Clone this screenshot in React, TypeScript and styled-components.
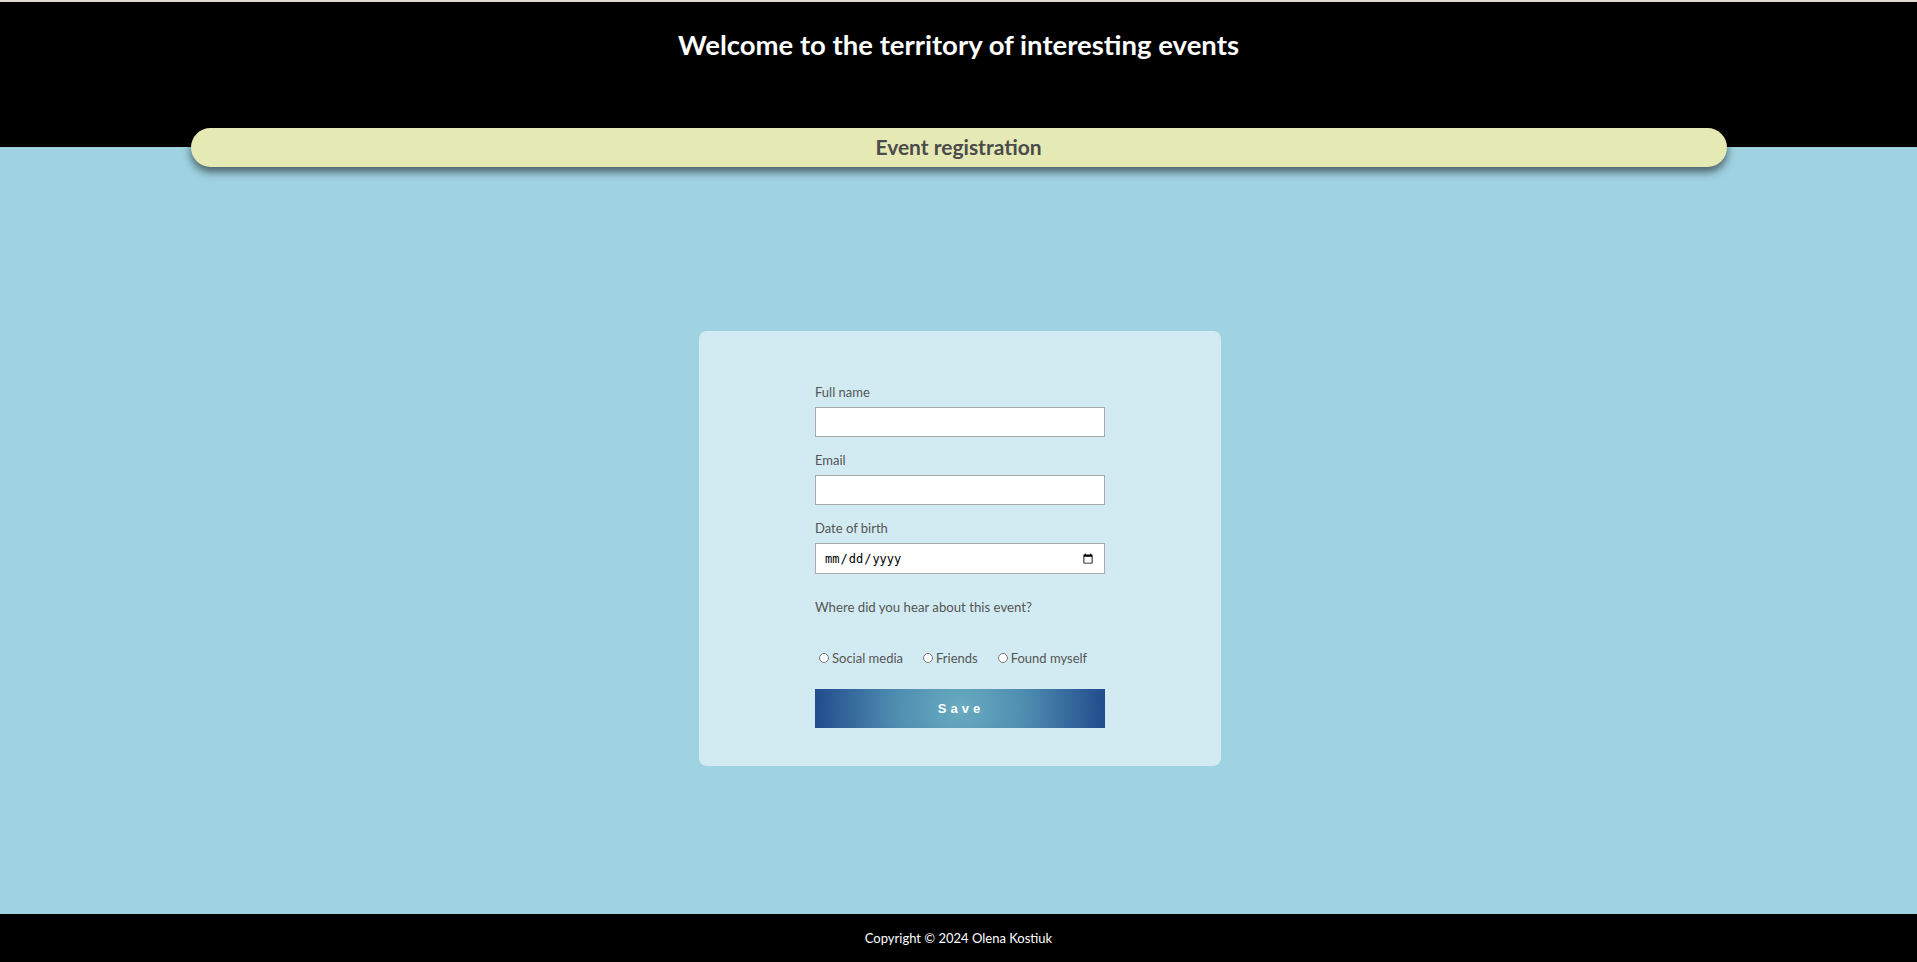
import React from "react";
import styled, { createGlobalStyle } from "styled-components";

const GlobalStyle = createGlobalStyle`
  * { box-sizing: border-box; }
  html, body { margin: 0; padding: 0; }
  body {
    background: #9fd3e2;
    font-family: Lato, "Open Sans", "Noto Sans", sans-serif;
    border-top: 2px solid #dcd9d3;
  }
`;

const Page = styled.div`
  min-height: calc(100vh - 2px);
  display: flex;
  flex-direction: column;
`;

const Header = styled.header`
  background: #000;
  height: 145px;
  display: flex;
  justify-content: center;
  padding-top: 24px;
`;

const Title = styled.h1`
  margin: 0;
  color: #fff;
  font-size: 27.5px;
  font-weight: 700;
  line-height: 38px;
  height: 38px;
`;

const Banner = styled.div`
  position: relative;
  width: 1536px;
  margin: -19px auto 0;
  height: 39px;
  border-radius: 20px;
  background: #e5e9b4;
  box-shadow: 0 5px 8px rgba(0, 0, 0, 0.55);
  display: flex;
  align-items: center;
  justify-content: center;
  padding-bottom: 2px;
`;

const BannerTitle = styled.h2`
  margin: 0;
  color: #4b4b4b;
  font-size: 21px;
  font-weight: 700;
`;

const Main = styled.main`
  flex: 1;
  padding-top: 164px;
  display: flex;
  justify-content: center;
  align-items: flex-start;
`;

const Card = styled.section`
  width: 522px;
  margin-left: 3px;
  height: 435px;
  background: #d2ebf2;
  border-radius: 8px;
  display: flex;
  justify-content: center;
  padding-top: 53px;
`;

const Form = styled.form`
  width: 290px;
  display: flex;
  flex-direction: column;
`;

const Field = styled.div`
  display: flex;
  flex-direction: column;
  gap: 6px;
  margin-bottom: 15px;
`;

const Label = styled.label`
  color: #555;
  font-size: 13px;
  line-height: 17px;
`;

const Input = styled.input<{ $tall?: boolean }>`
  width: 290px;
  height: ${(p) => (p.$tall ? "31px" : "30px")};
  border: 1px solid #aaa;
  background: #fff;
  padding: 0 8px;
  margin: 0;
  font-size: 12px;
`;

const Question = styled.p`
  margin: 10px 0 0;
  color: #555;
  font-size: 13.2px;
  line-height: 17px;
`;

const RadioRow = styled.div`
  display: flex;
  align-items: center;
  margin-top: 33px;
  height: 18px;
`;

const RadioLabel = styled.label`
  display: flex;
  align-items: center;
  color: #555;
  font-size: 13px;
  margin-right: 16px;
`;

const Radio = styled.input`
  width: 10px;
  height: 10px;
  margin: 0 3px 0 4px;
`;

const SaveButton = styled.button`
  margin-top: 22px;
  width: 290px;
  height: 39px;
  border: none;
  background: radial-gradient(circle at center, #69abc0 0%, #4e8db0 45%, #214b8d 100%);
  color: #fff;
  font-family: "Liberation Sans", Arial, sans-serif;
  font-weight: 700;
  font-size: 13px;
  letter-spacing: 4px;
  padding-left: 8px;
  cursor: pointer;
`;

const Footer = styled.footer`
  background: #000;
  height: 48px;
  display: flex;
  align-items: center;
  justify-content: center;
  color: #fff;
  font-size: 13px;
`;

export default function App() {
  return (
    <>
      <GlobalStyle />
      <Page>
        <Header>
          <Title>Welcome to the territory of interesting events</Title>
        </Header>
        <Banner>
          <BannerTitle>Event registration</BannerTitle>
        </Banner>
        <Main>
          <Card>
            <Form onSubmit={(e) => e.preventDefault()}>
              <Field>
                <Label htmlFor="fullname">Full name</Label>
                <Input id="fullname" type="text" />
              </Field>
              <Field>
                <Label htmlFor="email">Email</Label>
                <Input id="email" type="email" />
              </Field>
              <Field>
                <Label htmlFor="dob">Date of birth</Label>
                <Input id="dob" type="date" $tall />
              </Field>
              <Question>Where did you hear about this event?</Question>
              <RadioRow>
                <RadioLabel>
                  <Radio type="radio" name="source" />
                  Social media
                </RadioLabel>
                <RadioLabel>
                  <Radio type="radio" name="source" />
                  Friends
                </RadioLabel>
                <RadioLabel>
                  <Radio type="radio" name="source" />
                  Found myself
                </RadioLabel>
              </RadioRow>
              <SaveButton type="submit">Save</SaveButton>
            </Form>
          </Card>
        </Main>
        <Footer>Copyright © 2024 Olena Kostiuk</Footer>
      </Page>
    </>
  );
}
